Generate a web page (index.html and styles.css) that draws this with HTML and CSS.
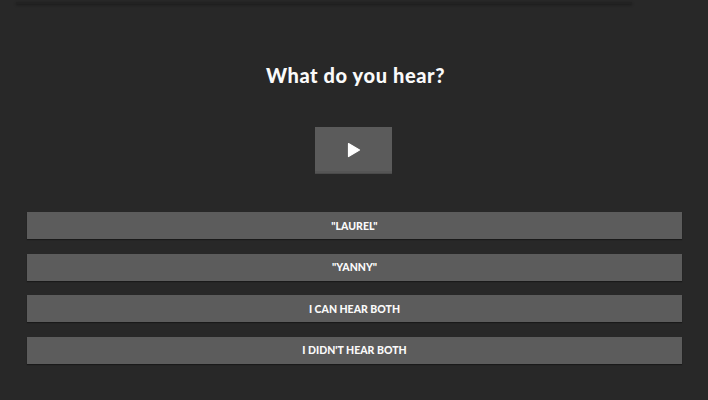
FILE: index.html
```html
<!DOCTYPE html>
<html>
<head>
<meta charset="utf-8">
<link rel="stylesheet" href="styles.css">
</head>
<body>
<div class="topbar"></div>
<main class="quiz">
  <h1 class="title">What do you hear?</h1>
  <button class="play" aria-label="Play">
    <svg width="14" height="16" viewBox="0 0 14 16"><path d="M1.5 1.5 L12.5 8 L1.5 14.5 Z" fill="#fff" stroke="#fff" stroke-width="1.2" stroke-linejoin="round"/></svg>
  </button>
  <div class="answers">
    <button class="answer">"LAUREL"</button>
    <button class="answer">"YANNY"</button>
    <button class="answer">I CAN HEAR BOTH</button>
    <button class="answer">I DIDN'T HEAR BOTH</button>
  </div>
</main>
</body>
</html>
```
FILE: styles.css
```css
html, body {
  margin: 0;
  padding: 0;
  background: #282828;
  width: 708px;
  height: 400px;
  overflow: hidden;
  font-family: "Lato", "DejaVu Sans", sans-serif;
}
.topbar {
  margin: 2px 0 0 16px;
  width: 616px;
  height: 2px;
  background: #222;
  box-shadow: 0 1px 3px rgba(0,0,0,0.4);
}
.quiz {
  display: flex;
  flex-direction: column;
  align-items: center;
  padding: 0 26px 0 27px;
}
.title {
  margin: 59px 0 0 0;
  font-size: 20px;
  line-height: 25px;
  font-weight: 900;
  color: #fafafa;
  letter-spacing: 0.6px;
  transform: translateX(1px);
}
.play {
  margin-top: 39px;
  width: 77px;
  height: 46px;
  border: none;
  background: #5b5b5b;
  box-shadow: 0 1px 0 #4a4a4a, inset 0 -2px 0 #555;
  display: flex;
  align-items: center;
  justify-content: center;
  padding: 0;
  transform: translateX(-1px);
}
.answers {
  margin-top: 39px;
  align-self: stretch;
  display: flex;
  flex-direction: column;
  gap: 14.67px;
}
.answer {
  height: 27px;
  border: none;
  background: #5c5c5c;
  box-shadow: 0 1px 1px rgba(0,0,0,0.35);
  color: #fafafa;
  font-family: "Lato", "DejaVu Sans", sans-serif;
  font-weight: 900;
  font-size: 10.5px;
  letter-spacing: 0px;
  padding: 0;
}
```
